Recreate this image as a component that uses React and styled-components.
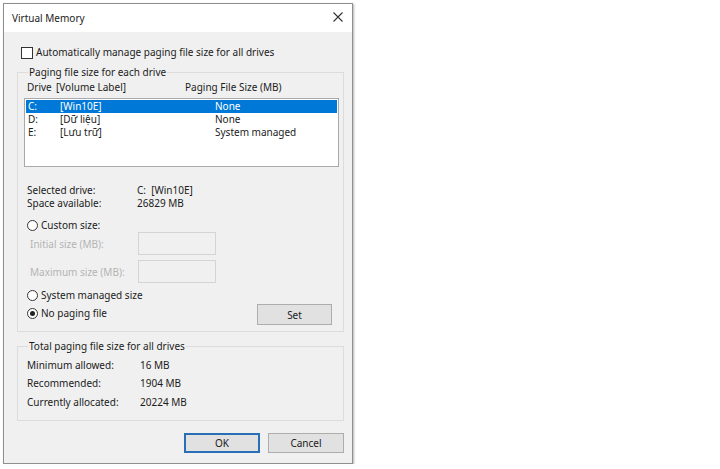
import React from 'react'
import styled, { createGlobalStyle } from 'styled-components'

const GlobalStyle = createGlobalStyle`
  html, body {
    margin: 0;
    background: #ffffff;
  }
  body {
    font-family: "Segoe UI", "Noto Sans", "Liberation Sans", sans-serif;
    font-size: 10px;
    color: #1b1b1b;
  }
`

const Page = styled.div`
  padding: 3px 0 0 3px;
`

const Dialog = styled.div`
  box-sizing: border-box;
  width: 350px;
  height: 461px;
  display: flex;
  flex-direction: column;
  background: #f0f0f0;
  border: 1px solid #8f8f8f;
  box-shadow: 1px 1px 2px rgba(0, 0, 0, 0.3);
`

const TitleBar = styled.div`
  height: 28px;
  flex: none;
  display: flex;
  align-items: center;
  justify-content: space-between;
  padding: 0 9px 0 8px;
  background: #ffffff;
`

const Title = styled.span`
  font-size: 10px;
  color: #222;
`

const Close = styled.svg`
  width: 10px;
  height: 10px;
  margin-bottom: 2px;
`

const Body = styled.div`
  flex: 1;
  display: flex;
  flex-direction: column;
  padding: 0 8px 0 13px;
`

const CheckRow = styled.label`
  display: flex;
  align-items: center;
  gap: 3px;
  height: 13px;
  margin: 14px 0 0 4px;
  line-height: 13px;
`

const CheckBox = styled.span`
  box-sizing: border-box;
  width: 12px;
  height: 12px;
  border: 1px solid #333;
  background: #fff;
`

const Group = styled.fieldset`
  margin: ${p => p.$top}px 0 0;
  padding: 0 4px ${p => p.$bottom}px 6px;
  border: 1px solid #dcdcdc;
  min-width: 0;
`

const Legend = styled.legend`
  padding: 0 1px;
  margin-left: 4px;
  line-height: 14px;
`

const ListHeader = styled.div`
  display: grid;
  grid-template-columns: 29px 129px 1fr;
  margin: 2px 0 0 3px;
  line-height: 13px;
`

const ListBox = styled.div`
  height: 69px;
  box-sizing: border-box;
  margin-top: 4px;
  padding: 1px;
  border: 1px solid #a9a9a9;
  background: #fff;
`

const ListRow = styled.div`
  display: grid;
  grid-template-columns: 32px 155px 1fr;
  height: 13px;
  line-height: 13px;
  padding-left: 2px;
  background: ${p => (p.$selected ? '#0078d7' : 'transparent')};
  color: ${p => (p.$selected ? '#fff' : 'inherit')};
`

const InfoGrid = styled.div`
  display: grid;
  grid-template-columns: ${p => p.$label}px 1fr;
  row-gap: ${p => p.$gap}px;
  margin: ${p => p.$top}px 0 0 3px;
  line-height: 13px;
`

const Radio = styled.label`
  display: flex;
  align-items: center;
  gap: 3px;
  height: 13px;
  line-height: 13px;
  margin: ${p => p.$top || 0}px 0 0 3px;
`

const RadioDot = styled.span`
  box-sizing: border-box;
  width: 11px;
  height: 11px;
  border-radius: 50%;
  border: 1px solid #333;
  background: #fff;
  display: flex;
  align-items: center;
  justify-content: center;
  &::after {
    content: '';
    width: 5px;
    height: 5px;
    border-radius: 50%;
    background: ${p => (p.$checked ? '#222' : 'transparent')};
  }
`

const SizeRow = styled.div`
  display: grid;
  grid-template-columns: 108px 78px;
  align-items: center;
  height: 23px;
  margin: ${p => p.$top}px 0 0 6px;
  color: #b4b4b4;
`

const SizeInput = styled.span`
  box-sizing: border-box;
  height: 23px;
  border: 1px solid #d4d4d4;
  background: #f0f0f0;
`

const BottomRow = styled.div`
  display: flex;
  justify-content: space-between;
  align-items: flex-start;
  margin-top: 6px;
  padding-right: 7px;
`

const RadioStack = styled.div`
  display: flex;
  flex-direction: column;
  gap: 5px;
`

const Button = styled.button`
  box-sizing: border-box;
  width: ${p => p.$w || 76}px;
  height: ${p => p.$h || 20}px;
  margin: ${p => p.$top || 0}px 0 0;
  padding: 0;
  font: inherit;
  color: #1b1b1b;
  background: #e1e1e1;
  border: ${p => (p.$default ? '2px solid #2a6fb6' : '1px solid #adadad')};
`

const Buttons = styled.div`
  display: flex;
  justify-content: flex-end;
  gap: 8px;
  margin-top: 12px;
`

const drives = [
  { d: 'C:', label: '[Win10E]', size: 'None', selected: true },
  { d: 'D:', label: '[Dữ liệu]', size: 'None' },
  { d: 'E:', label: '[Lưu trữ]', size: 'System managed' },
]

export default function App() {
  return (
    <Page>
      <GlobalStyle />
      <Dialog>
        <TitleBar>
          <Title>Virtual Memory</Title>
          <Close viewBox="0 0 10 10">
            <path d="M0.5 0.5 L9.5 9.5 M9.5 0.5 L0.5 9.5" stroke="#333" strokeWidth="1.1" fill="none" />
          </Close>
        </TitleBar>
        <Body>
          <CheckRow>
            <CheckBox />
            Automatically manage paging file size for all drives
          </CheckRow>
          <Group $top={6} $bottom={6}>
            <Legend>Paging file size for each drive</Legend>
            <ListHeader>
              <span>Drive</span>
              <span>[Volume Label]</span>
              <span>Paging File Size (MB)</span>
            </ListHeader>
            <ListBox>
              {drives.map(r => (
                <ListRow key={r.d} $selected={r.selected}>
                  <span>{r.d}</span>
                  <span>{r.label}</span>
                  <span>{r.size}</span>
                </ListRow>
              ))}
            </ListBox>
            <InfoGrid $label={110} $gap={0} $top={17}>
              <span>Selected drive:</span>
              <span>C:&nbsp; [Win10E]</span>
              <span>Space available:</span>
              <span>26829 MB</span>
            </InfoGrid>
            <Radio $top={9}>
              <RadioDot />
              Custom size:
            </Radio>
            <SizeRow $top={0}>
              <span>Initial size (MB):</span>
              <SizeInput />
            </SizeRow>
            <SizeRow $top={5}>
              <span>Maximum size (MB):</span>
              <SizeInput />
            </SizeRow>
            <BottomRow>
              <RadioStack>
                <Radio>
                  <RadioDot />
                  System managed size
                </Radio>
                <Radio>
                  <RadioDot $checked />
                  No paging file
                </Radio>
              </RadioStack>
              <Button $w={75} $h={21} $top={15}>Set</Button>
            </BottomRow>
          </Group>
          <Group $top={7} $bottom={11}>
            <Legend>Total paging file size for all drives</Legend>
            <InfoGrid $label={113} $gap={5.5} $top={5.5}>
              <span>Minimum allowed:</span>
              <span>16 MB</span>
              <span>Recommended:</span>
              <span>1904 MB</span>
              <span>Currently allocated:</span>
              <span>20224 MB</span>
            </InfoGrid>
          </Group>
          <Buttons>
            <Button $default>OK</Button>
            <Button>Cancel</Button>
          </Buttons>
        </Body>
      </Dialog>
    </Page>
  )
}
